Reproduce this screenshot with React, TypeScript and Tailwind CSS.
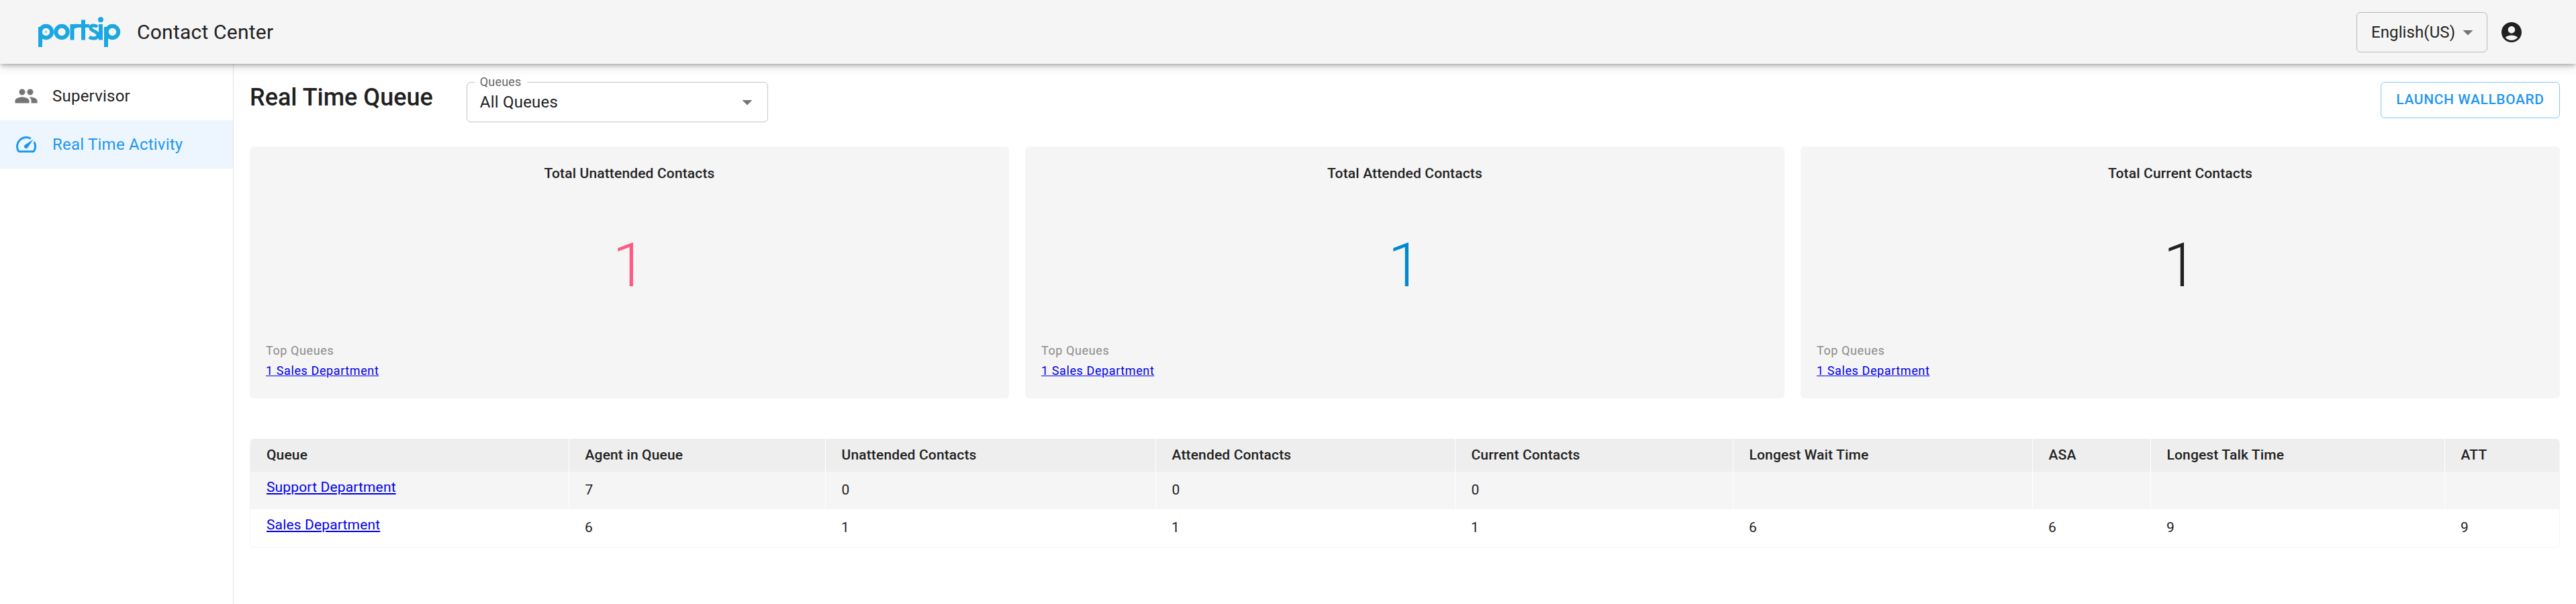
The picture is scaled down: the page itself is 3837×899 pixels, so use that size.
import React from 'react';

function PeopleIcon() {
  return (
    <svg viewBox="0 0 24 24" className="h-9 w-9 fill-[#757575]">
      <path d="M16 11c1.66 0 2.99-1.34 2.99-3S17.66 5 16 5c-1.66 0-3 1.34-3 3s1.34 3 3 3zm-8 0c1.66 0 2.99-1.34 2.99-3S9.66 5 8 5C6.34 5 5 6.34 5 8s1.34 3 3 3zm0 2c-2.33 0-7 1.17-7 3.5V19h14v-2.5c0-2.33-4.67-3.5-7-3.5zm8 0c-.29 0-.62.02-.97.05 1.16.84 1.97 1.97 1.97 3.45V19h6v-2.5c0-2.33-4.67-3.5-7-3.5z" />
    </svg>
  );
}

function SpeedIcon() {
  return (
    <svg viewBox="0 0 24 24" className="h-9 w-9 fill-[#2196f3]">
      <path d="M20.38 8.57l-1.23 1.85a8 8 0 0 1-.22 7.58H5.07A8 8 0 0 1 15.58 6.85l1.85-1.23A10 10 0 0 0 3.35 19a2 2 0 0 0 1.72 1h13.85a2 2 0 0 0 1.74-1 10 10 0 0 0-.27-10.44z" />
      <path d="M10.59 15.41a2 2 0 0 0 2.83 0l5.66-8.49-8.49 5.66a2 2 0 0 0 0 2.83z" />
    </svg>
  );
}

function AccountIcon() {
  return (
    <svg viewBox="0 0 24 24" className="h-9 w-9 fill-[#212121]">
      <path d="M12 2C6.48 2 2 6.48 2 12s4.48 10 10 10 10-4.48 10-10S17.52 2 12 2zm0 4c1.93 0 3.5 1.57 3.5 3.5S13.93 13 12 13s-3.5-1.57-3.5-3.5S10.07 6 12 6zm0 14c-2.03 0-4.43-.82-6.14-2.88C7.55 15.8 9.68 15 12 15s4.45.8 6.14 2.12C16.43 19.18 14.03 20 12 20z" />
    </svg>
  );
}

function Caret() {
  return (
    <svg viewBox="0 0 24 24" className="h-9 w-9 fill-[#757575]">
      <path d="M7 10l5 5 5-5z" />
    </svg>
  );
}

function Logo() {
  return (
    <svg viewBox="50 20 140 55" className="ml-[50px] h-[55px] w-[140px]">
      <g fill="none" stroke="#1ba7e1" strokeWidth="6">
        <circle cx="68.5" cy="47.5" r="8.7" />
        <circle cx="92" cy="47.5" r="8.7" />
        <path d="M107.5 59.5V36M107.5 44c0-4 3-5.5 7.5-5.5" />
        <path d="M124 29.5v30" />
        <path d="M115 38.5h18" strokeWidth="5" />
        <path d="M145 40c-3-3-10-3-10 1.500 0 5.500 11 4 11 11 0 5-9 6-13 2.500" strokeWidth="5" />
        <circle cx="167.500" cy="47.500" r="8.700" />
      </g>
      <g fill="#1ba7e1">
        <rect x="57" y="40" width="6" height="30" />
        <circle cx="68.500" cy="47.500" r="1.500" opacity="0.6" />
        <rect x="147" y="36" width="6" height="23.500" />
        <circle cx="150" cy="29.300" r="4" />
        <rect x="155" y="40" width="6" height="30" />
      </g>
    </svg>
  );
}

function StatCard({ title, color }: { title: string; color: string }) {
  return (
    <div className="flex flex-1 flex-col rounded-md bg-[#f5f5f5] px-6 pt-7 pb-[29px]">
      <h3 className="text-center text-[21px] leading-6 font-medium tracking-[0.15px] text-[#212121]">{title}</h3>
      <div className={`mt-[81px] text-center text-[90px] leading-[90px] font-light ${color}`}>1</div>
      <p className="mt-[69px] text-[18px] leading-6 tracking-[0.6px] text-[#8a8a8a]">Top Queues</p>
      <a href="#" className="mt-[6px] text-[18px] leading-6 tracking-[0.6px] text-[#0000ee] underline">
        1 Sales Department
      </a>
    </div>
  );
}

const columns = [
  { name: 'Queue', width: 'w-[474px]' },
  { name: 'Agent in Queue', width: 'w-[382px]' },
  { name: 'Unattended Contacts', width: 'w-[492px]' },
  { name: 'Attended Contacts', width: 'w-[446px]' },
  { name: 'Current Contacts', width: 'w-[414px]' },
  { name: 'Longest Wait Time', width: 'w-[446px]' },
  { name: 'ASA', width: 'w-[176px]' },
  { name: 'Longest Talk Time', width: 'w-[438px]' },
  { name: 'ATT', width: 'w-[173px]' },
];

const rows = [
  { queue: 'Support Department', values: ['7', '0', '0', '0', '', '', '', ''], bg: 'bg-[#f5f5f5]' },
  { queue: 'Sales Department', values: ['6', '1', '1', '1', '6', '6', '9', '9'], bg: 'bg-white' },
];

export default function App() {
  return (
    <div className="flex min-h-screen flex-col overflow-hidden bg-white font-[Roboto,sans-serif] text-[#212121]">
      <header className="relative z-10 flex h-[95px] items-center bg-[#f5f5f5] pr-[78px] shadow-[0_3px_6px_-1px_rgba(0,0,0,0.3),0_6px_14px_0_rgba(0,0,0,0.1)]">
        <Logo />
        <span className="ml-[14px] text-[30px] leading-9 tracking-[0.225px]">Contact Center</span>
        <div className="ml-auto flex h-[60px] w-[195px] items-center justify-between rounded-md border border-[#b8b8b8] pr-[10px] pl-[21px] text-[24px] tracking-[0.1px]">
          <span>English(US)</span>
          <Caret />
        </div>
        <div className="ml-[18px]">
          <AccountIcon />
        </div>
      </header>

      <div className="flex flex-1">
        <nav className="w-[348px] shrink-0 border-r border-[#e0e0e0] pt-3 tracking-[0.225px]">
          <div className="flex h-[72px] items-center gap-[21px] pl-[21px] text-[24px]">
            <PeopleIcon />
            <span>Supervisor</span>
          </div>
          <div className="flex h-[72px] items-center gap-[21px] bg-[#edf6fe] pl-[21px] text-[24px] text-[#2196f3]">
            <SpeedIcon />
            <span>Real Time Activity</span>
          </div>
        </nav>

        <main className="min-w-0 flex-1 px-6 pt-[27px]">
          <div className="flex h-[60px] items-start">
            <h1 className="h-[46px] text-[36px] leading-[46px] font-medium">Real Time Queue</h1>
            <div className="relative ml-[50px] flex h-[60px] w-[449px] items-center justify-between rounded-md border border-[#c4c4c4] pr-[12px] pl-[19px] text-[24px] tracking-[0.225px]">
              <span>All Queues</span>
              <Caret />
              <span className="absolute -top-[11px] left-[11px] bg-white px-2 text-[18px] leading-5 tracking-[0.2px] text-[#666666]">
                Queues
              </span>
            </div>
            <button className="ml-auto h-[54px] w-[267px] rounded-md border border-[#85c6f9] text-[21px] font-medium tracking-[0.6px] text-[#2196f3] uppercase">
              Launch Wallboard
            </button>
          </div>

          <div className="mt-9 flex gap-6">
            <StatCard title="Total Unattended Contacts" color="text-[#ff5a85]" />
            <StatCard title="Total Attended Contacts" color="text-[#0288d1]" />
            <StatCard title="Total Current Contacts" color="text-[#212121]" />
          </div>

          <div className="mt-[60px] overflow-hidden rounded-md border-x border-b border-[#f3f3f3]">
            <table className="w-full table-fixed border-collapse text-left text-[21px] tracking-[0.15px]">
              <thead>
                <tr className="h-[49px] bg-[#eeeeee]">
                  {columns.map((c) => (
                    <th key={c.name} className={`${c.width} border-r border-white pl-6 font-medium last:border-r-0`}>
                      {c.name}
                    </th>
                  ))}
                </tr>
              </thead>
              <tbody>
                {rows.map((r) => (
                  <tr key={r.queue} className={`h-[56px] ${r.bg}`}>
                    <td className={`pb-2 pl-6 ${r.queue === 'Support Department' ? 'border-r border-white' : ''}`}>
                      <a href="#" className="text-[#0000ee] underline">
                        {r.queue}
                      </a>
                    </td>
                    {r.values.map((v, i) => (
                      <td
                        key={i}
                        className={`pl-6 ${r.queue === 'Support Department' ? 'border-r border-white last:border-r-0' : ''}`}
                      >
                        {v}
                      </td>
                    ))}
                  </tr>
                ))}
              </tbody>
            </table>
          </div>
        </main>
      </div>
    </div>
  );
}
